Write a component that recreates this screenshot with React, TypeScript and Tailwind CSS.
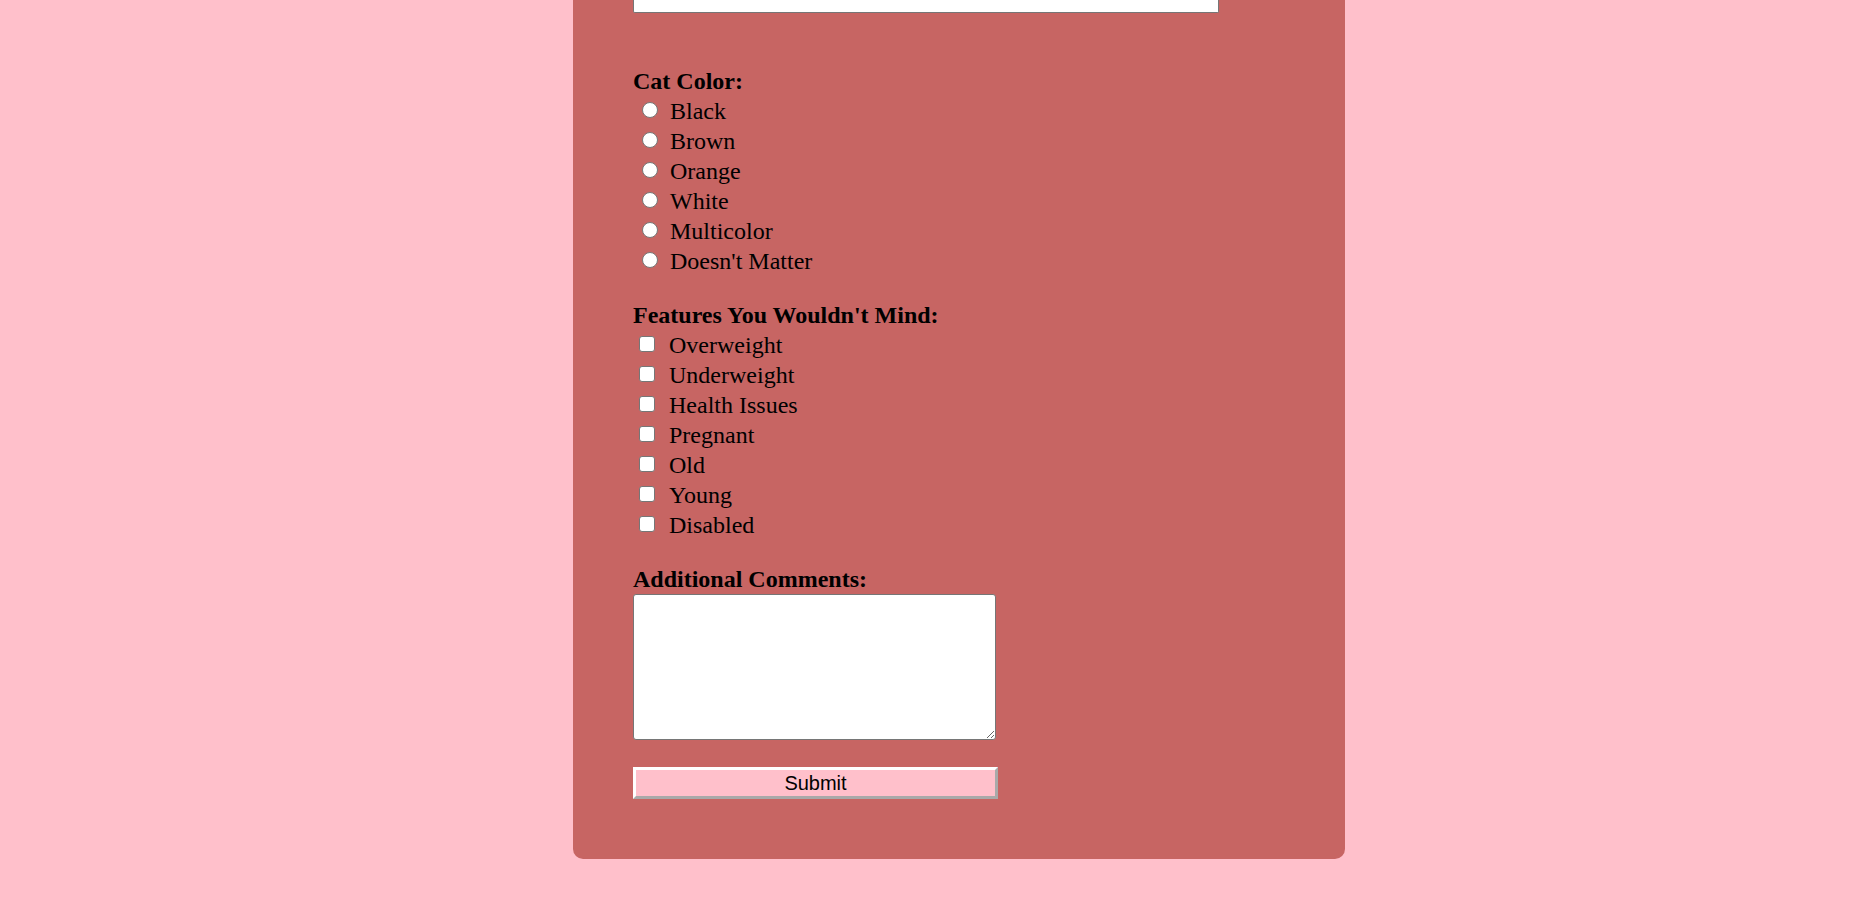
const colors = ['Black', 'Brown', 'Orange', 'White', 'Multicolor', "Doesn't Matter"];
const features = ['Overweight', 'Underweight', 'Health Issues', 'Pregnant', 'Old', 'Young', 'Disabled'];

const App = () => {
    return (
        <div className="min-h-screen bg-[#ffc0cb] font-['Liberation_Serif',serif] text-black">
            <form className="ml-[573px] w-[772px] rounded-b-[10px] bg-[#c76563] px-[60px] pb-[60px]">
                {/* bottom of the text input scrolled above */}
                <input
                    type="text"
                    className="block h-[13px] w-[586px] rounded-b-[2px] border border-t-0 border-[#767676] bg-white"
                />

                {/* Cat colour */}
                <div className="mt-[53px]">
                    <h3 className="h-[30px] text-[24px] font-bold leading-[30px]">Cat Color:</h3>
                    {colors.map(color => (
                        <label key={color} className="flex h-[30px] items-start text-[24px] leading-[30px]">
                            <input
                                type="radio"
                                name="color"
                                className="m-0 ml-[9px] mt-[6px] h-[16px] w-[16px] appearance-none rounded-full border-[1.5px] border-[#767676] bg-white"
                            />
                            <span className="ml-[12px]">{color}</span>
                        </label>
                    ))}
                </div>

                {/* Features */}
                <div className="mt-[24px]">
                    <h3 className="h-[30px] text-[24px] font-bold leading-[30px]">Features You Wouldn't Mind:</h3>
                    {features.map(feature => (
                        <label key={feature} className="flex h-[30px] items-start text-[24px] leading-[30px]">
                            <input
                                type="checkbox"
                                className="m-0 ml-[6px] mt-[6px] h-[16px] w-[16px] appearance-none rounded-[3px] border-[1.5px] border-[#767676] bg-white"
                            />
                            <span className="ml-[14px]">{feature}</span>
                        </label>
                    ))}
                </div>

                {/* Comments */}
                <div className="mt-[25px]">
                    <h3 className="h-[29px] text-[24px] font-bold leading-[29px]">Additional Comments:</h3>
                    <textarea className="block h-[146px] w-[363px] rounded-[3px] border border-[#767676] bg-white" />
                </div>

                <button
                    type="button"
                    className="mt-[27px] block h-[32px] w-[365px] border-[3px] border-solid border-t-white border-l-white border-r-[#a9a9a9] border-b-[#a9a9a9] bg-[#ffc0cb] font-['Liberation_Sans',Arial,sans-serif] text-[20px] leading-none text-black">
                    Submit
                </button>
            </form>
        </div>
    );
};

export default App;
